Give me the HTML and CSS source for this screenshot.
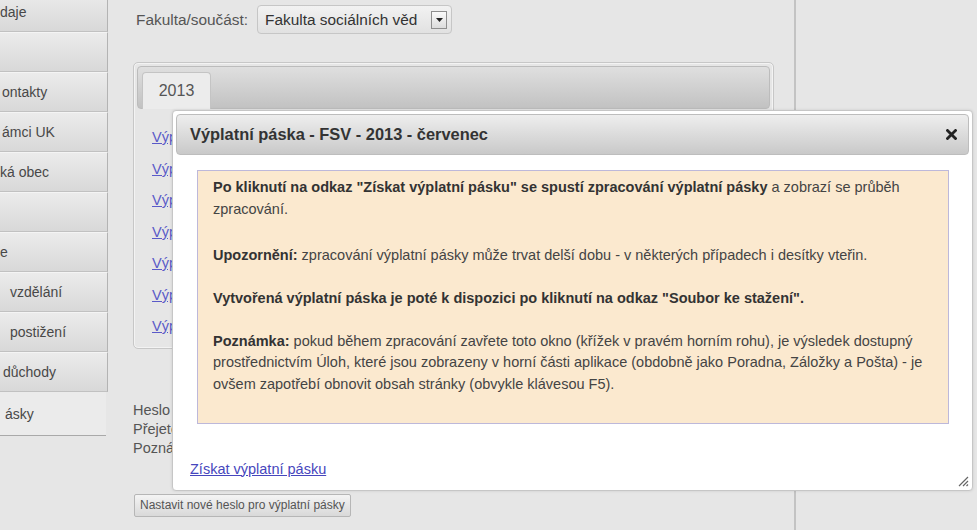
FILE: index.html
```html
<!DOCTYPE html>
<html lang="cs">
<head>
<meta charset="utf-8">
<title>Výplatní pásky</title>
<link rel="stylesheet" href="styles.css">
</head>
<body>
<div class="page">
  <nav class="sidebar">
    <div class="nav-item i0">daje</div>
    <div class="nav-item"></div>
    <div class="nav-item i2">ontakty</div>
    <div class="nav-item i2">ámci UK</div>
    <div class="nav-item i0">ká obec</div>
    <div class="nav-item"></div>
    <div class="nav-item i0">e</div>
    <div class="nav-item i10">vzdělání</div>
    <div class="nav-item i10">postižení</div>
    <div class="nav-item i3">důchody</div>
    <div class="nav-item active i5">ásky</div>
  </nav>

  <main class="main">
    <div class="filter">
      <span class="filter-label">Fakulta/součást:</span>
      <div class="select">
        <span>Fakulta sociálních věd</span>
        <span class="select-btn"><svg width="7" height="4" viewBox="0 0 7 4"><path d="M0 0H7L3.5 4Z" fill="#222"/></svg></span>
      </div>
    </div>

    <div class="tabs">
      <div class="tab-bar"><div class="tab">2013</div></div>
      <ul class="tab-list">
        <li><a href="#">Výplatní páska - leden</a></li>
        <li><a href="#">Výplatní páska - únor</a></li>
        <li><a href="#">Výplatní páska - březen</a></li>
        <li><a href="#">Výplatní páska - duben</a></li>
        <li><a href="#">Výplatní páska - květen</a></li>
        <li><a href="#">Výplatní páska - červen</a></li>
        <li><a href="#">Výplatní páska - červenec</a></li>
      </ul>
    </div>

    <div class="password-info">
      <p>Heslo pro výplatní pásky je nastaveno.</p>
      <p>Přejete-li si heslo změnit, použijte tlačítko níže.</p>
      <p>Poznámka: heslo slouží k otevření souboru s výplatní páskou.</p>
    </div>

    <button class="btn" type="button">Nastavit nové heslo pro výplatní pásky</button>
  </main>

  <aside class="right"></aside>
</div>

<div class="dialog">
  <div class="dialog-title">
    <span>Výplatní páska - FSV - 2013 - červenec</span>
    <svg class="close" width="11" height="11" viewBox="0 0 11 11"><path d="M1.5 1.5L9.5 9.5M9.5 1.5L1.5 9.5" stroke="#222" stroke-width="2.8" stroke-linecap="square"/></svg>
  </div>
  <div class="dialog-body">
    <div class="notice">
      <p class="lead"><b>Po kliknutí na odkaz "Získat výplatní pásku" se spustí zpracování výplatní pásky</b> a zobrazí se průběh zpracování.</p>
      <p><b>Upozornění:</b> zpracování výplatní pásky může trvat delší dobu - v některých případech i desítky vteřin.</p>
      <p><b>Vytvořená výplatní páska je poté k dispozici po kliknutí na odkaz "Soubor ke stažení".</b></p>
      <p><b>Poznámka:</b> pokud během zpracování zavřete toto okno (křížek v pravém horním rohu), je výsledek dostupný prostřednictvím Úloh, které jsou zobrazeny v horní části aplikace (obdobně jako Poradna, Záložky a Pošta) - je ovšem zapotřebí obnovit obsah stránky (obvykle klávesou F5).</p>
    </div>
    <a class="dialog-link" href="#">Získat výplatní pásku</a>
  </div>
  <svg class="grip" width="11" height="11" viewBox="0 0 11 11"><path d="M10 1L1 10M10 5L5 10M10 8.5L8.5 10" stroke="#666" stroke-width="1.2"/></svg>
</div>
</body>
</html>
```

FILE: styles.css
```css
* { box-sizing: border-box; }

html, body {
  margin: 0;
  height: 100%;
}

body {
  background: #e6e6e6;
  font-family: "Liberation Sans", Arial, sans-serif;
  color: #444;
  overflow: hidden;
}

.page {
  display: flex;
  height: 530px;
}

/* Sidebar */
.sidebar {
  width: 108px;
  flex: none;
  margin-top: -8px;
  display: flex;
  flex-direction: column;
}

.nav-item {
  height: 40px;
  flex: none;
  display: flex;
  align-items: center;
  font-size: 14px;
  color: #484848;
  white-space: nowrap;
  overflow: hidden;
  background: linear-gradient(#ebebeb, #d8d8d8);
  border-top: 1px solid #f4f4f4;
  border-bottom: 1px solid #c1c1c1;
  border-right: 1px solid #b3b3b3;
}

.nav-item.active {
  height: 44px;
  width: 106px;
  background: #ebebeb;
  border-top: 0;
  border-right: 0;
  border-bottom: 1px solid #a9a9a9;
}

.i0 { padding-left: 0; }
.i2 { padding-left: 2px; }
.i3 { padding-left: 3px; }
.i5 { padding-left: 5px; }
.i10 { padding-left: 10px; }

/* Main */
.main {
  width: 686px;
  flex: none;
  padding: 5px 20px 0 25px;
}

.filter {
  display: flex;
  align-items: center;
  height: 29px;
}

.filter-label {
  font-size: 15.4px;
  color: #555;
  padding-left: 3px;
  margin-right: 9px;
}

.select {
  width: 195px;
  height: 29px;
  display: flex;
  align-items: center;
  justify-content: space-between;
  padding: 0 4px 0 7px;
  border: 1px solid #c6c6c6;
  border-radius: 4px;
  background: linear-gradient(#f2f2f2, #e1e1e1);
  font-size: 15.4px;
  color: #333;
}

.select-btn {
  width: 16px;
  height: 18px;
  display: flex;
  align-items: center;
  justify-content: center;
  border: 1px solid #8e8e8e;
  background: linear-gradient(#fafafa, #dcdcdc);
}

.tabs {
  margin-top: 28px;
  height: 287px;
  padding: 3px;
  border: 1px solid #c7c7c7;
  border-radius: 5px;
  box-shadow: inset 0 0 0 1px #f3f3f3;
}

.tab-bar {
  height: 43px;
  display: flex;
  align-items: flex-end;
  padding: 5px 0 0 4px;
  border: 1px solid #bcbcbc;
  border-radius: 4px;
  background: linear-gradient(#dfdfdf, #c2c2c2);
}

.tab {
  width: 69px;
  height: 37px;
  margin-bottom: -1px;
  display: flex;
  align-items: center;
  justify-content: center;
  background: #ececec;
  border: 1px solid #c4c4c4;
  border-bottom: 0;
  border-radius: 4px 4px 0 0;
  font-size: 16px;
  color: #555;
}

.tab-list {
  list-style: none;
  margin: 0;
  padding: 13px 0 0 15px;
  font-size: 14.5px;
  line-height: 31.5px;
}

.tab-list a {
  color: #5a5ac8;
}

.password-info {
  margin-top: 52px;
  font-size: 14.5px;
  line-height: 19.2px;
  color: #555;
  white-space: nowrap;
}

.password-info p { margin: 0; }

.btn {
  display: block;
  margin: 35px 0 0 1px;
  height: 23px;
  padding: 0 5px;
  font-family: "Liberation Sans", Arial, sans-serif;
  font-size: 12px;
  color: #555;
  border: 1px solid #b6b6b6;
  border-radius: 2px;
  background: linear-gradient(#f4f4f4, #d9d9d9);
}

.right {
  flex: 1;
  border-left: 2px solid #c3c3c3;
}

/* Dialog */
.dialog {
  position: absolute;
  left: 172px;
  top: 110px;
  width: 801px;
  height: 381px;
  padding: 3px;
  background: #fff;
  border: 1px solid #c6c6c6;
  border-radius: 4px;
  box-shadow: 0 0 3px rgba(0, 0, 0, 0.12);
}

.dialog-title {
  height: 41px;
  display: flex;
  align-items: center;
  justify-content: space-between;
  padding: 0 11px 0 13px;
  border: 1px solid #bdbdbd;
  border-radius: 4px;
  background: linear-gradient(#eeeeee, #c9c9c9);
  font-size: 16.4px;
  font-weight: bold;
  color: #333;
}

.dialog-body {
  padding: 15px 14px 0 14px;
}

.notice {
  margin: 0 6px 0 7px;
  padding: 6px 15px 6px;
  background: #fbe9cf;
  border: 1px solid #bdb8da;
  font-size: 14.5px;
  line-height: 21.5px;
  color: #444;
}

.notice p { margin: 0 0 21.5px; }
.notice p.lead { margin-bottom: 24.5px; }
.notice b { color: #333; }

.dialog-link {
  display: inline-block;
  margin-top: 37px;
  font-size: 14.5px;
  color: #4646bd;
}

.grip {
  position: absolute;
  right: 3px;
  bottom: 3px;
}
```
